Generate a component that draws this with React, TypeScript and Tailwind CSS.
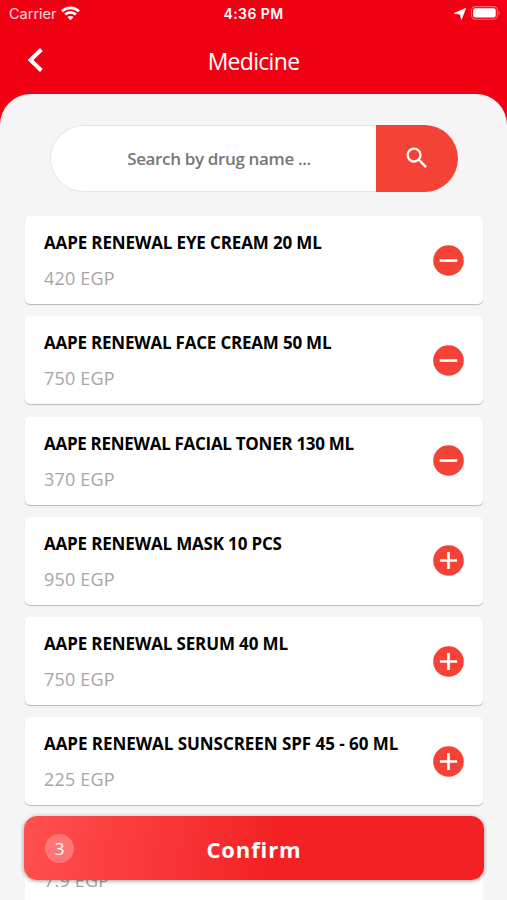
import { MdSearch } from 'react-icons/md';

type Drug = { name: string; price: string; added: boolean; tracking: string };

const drugs: Drug[] = [
  { name: 'AAPE RENEWAL EYE CREAM 20 ML', price: '420 EGP', added: true, tracking: 'tracking-[-0.14px]' },
  { name: 'AAPE RENEWAL FACE CREAM 50 ML', price: '750 EGP', added: true, tracking: 'tracking-[-0.21px]' },
  { name: 'AAPE RENEWAL FACIAL TONER 130 ML', price: '370 EGP', added: true, tracking: 'tracking-[-0.29px]' },
  { name: 'AAPE RENEWAL MASK 10 PCS', price: '950 EGP', added: false, tracking: 'tracking-[-0.17px]' },
  { name: 'AAPE RENEWAL SERUM 40 ML', price: '750 EGP', added: false, tracking: 'tracking-[-0.14px]' },
  { name: 'AAPE RENEWAL SUNSCREEN SPF 45 - 60 ML', price: '225 EGP', added: false, tracking: 'tracking-[-0.05px]' },
];

function StatusBar() {
  return (
    <div className="flex h-7 items-center justify-between pr-[7px] pl-[9px] font-['Inter',sans-serif] text-white">
      <div className="flex w-40 items-center gap-[6px]">
        <span className="text-[14.5px] leading-7 text-white/85">Carrier</span>
        <svg width="19" height="15" viewBox="0 0 19 15" className="-mt-0.5 -ml-[2px]" fill="none" stroke="white" strokeWidth="2.7">
          <path d="M1 5.3C5.8.7 13.2.7 18 5.3" />
          <path d="M4.1 8.5c3.1-2.9 7.7-2.9 10.8 0" />
          <path d="M6.4 11.1c1.8-1.6 4.4-1.6 6.2 0L9.5 14.3z" fill="white" stroke="none" />
        </svg>
      </div>
      <span className="-ml-0.5 text-[14px] leading-7 font-semibold tracking-[0.4px]">4:36 PM</span>
      <div className="flex w-40 items-center justify-end gap-[5px]">
        <svg width="12" height="12" viewBox="0 0 12 12" fill="white">
          <path d="M11.6.4 7.4 11.3 6.3 6.2.5 5.3z" stroke="white" strokeWidth=".8" strokeLinejoin="round" />
        </svg>
        <svg width="29" height="14" viewBox="0 0 29 14" fill="white" className="-mt-[2px]">
          <rect x=".6" y=".6" width="25.8" height="12.6" rx="3.6" fill="none" stroke="white" strokeOpacity=".42" strokeWidth="1.1" />
          <rect x="2.2" y="2.3" width="22.5" height="9.2" rx="2" />
          <path d="M27.6 4.7c1.5.6 1.5 4 0 4.6z" fillOpacity=".45" />
        </svg>
      </div>
    </div>
  );
}

function DrugCard({ drug }: { drug: Drug }) {
  return (
    <li className="flex h-[88px] shrink-0 items-center justify-between rounded-[5px] bg-white pr-[19px] pl-[19px] shadow-[0_1px_1px_rgba(0,0,0,0.25)]">
      <div className="flex flex-col gap-[9px] pt-px">
        <span className={`text-[17px] leading-[26px] font-bold whitespace-nowrap text-black ${drug.tracking}`}>{drug.name}</span>
        <span className="text-[18px] leading-[26px] tracking-[0.2px] whitespace-nowrap text-[#a6a6a6]">{drug.price}</span>
      </div>
      <svg width="31" height="31" viewBox="0 0 31 31" className="shrink-0">
        <circle cx="15.5" cy="15.5" r="15.3" fill="#f44336" />
        <path d={drug.added ? 'M6.7 15.5h17.6' : 'M6.9 15.5h17.2M15.5 6.9v17.2'} stroke="white" strokeWidth="2.7" />
      </svg>
    </li>
  );
}

export default function App() {
  return (
    <div className="relative flex h-[900px] w-full flex-col overflow-hidden bg-[#f10014] font-['Open_Sans','Noto_Sans',sans-serif]">
      <StatusBar />
      <header className="grid h-[66px] grid-cols-[72px_1fr_72px] items-center text-white">
        <svg width="18" height="24" viewBox="0 0 18 24" className="-mt-[3px] ml-[27px]" fill="none" stroke="white" strokeWidth="4">
          <path d="M14.4 1.5 3.5 12l10.9 10.5" />
        </svg>
        <h1 className="text-center text-[23px] leading-8 tracking-[-0.7px]">Medicine</h1>
      </header>
      <main className="flex min-h-0 flex-1 flex-col rounded-t-[31px] bg-[#f5f5f5] pt-[30.5px] pr-[24px] pl-[25px]">
        <div className="ml-[25px] flex h-[67px] w-[408px] shrink-0 overflow-hidden rounded-full">
          <div className="flex flex-1 items-center justify-center rounded-l-full border border-r-0 border-[#e4e4e4] bg-white pt-0.5 pl-[11px]">
            <span className="text-[17px] font-semibold tracking-[-0.35px] whitespace-nowrap text-[#777]">Search by drug name ...</span>
          </div>
          <button className="flex w-[82px] items-center justify-center bg-[#f44336] text-white">
            <MdSearch size={28} />
          </button>
        </div>
        <ul className="mt-[24.8px] flex flex-col gap-[12.2px]">
          {drugs.map((drug) => (
            <DrugCard key={drug.name} drug={drug} />
          ))}
          <li className="flex h-[88px] shrink-0 items-end rounded-[5px] bg-white pb-[12px] pl-[19px]">
            <span className="text-[18px] leading-[26px] tracking-[0.2px] text-[#a6a6a6]">7.9 EGP</span>
          </li>
        </ul>
      </main>
      <button className="absolute top-[816px] left-[24px] flex h-[64px] w-[460px] items-center justify-center rounded-[13px] bg-[linear-gradient(100deg,#ff5050_0%,#f32124_55%)] text-white shadow-[0_1px_4px_rgba(0,0,0,0.4)]">
        <span className="absolute top-[18px] left-[21px] flex size-[29px] items-center justify-center rounded-full bg-white/25 text-[17px]">3</span>
        <span className="pt-0.5 text-[22px] font-bold tracking-[0.9px]">Confirm</span>
      </button>
    </div>
  );
}
